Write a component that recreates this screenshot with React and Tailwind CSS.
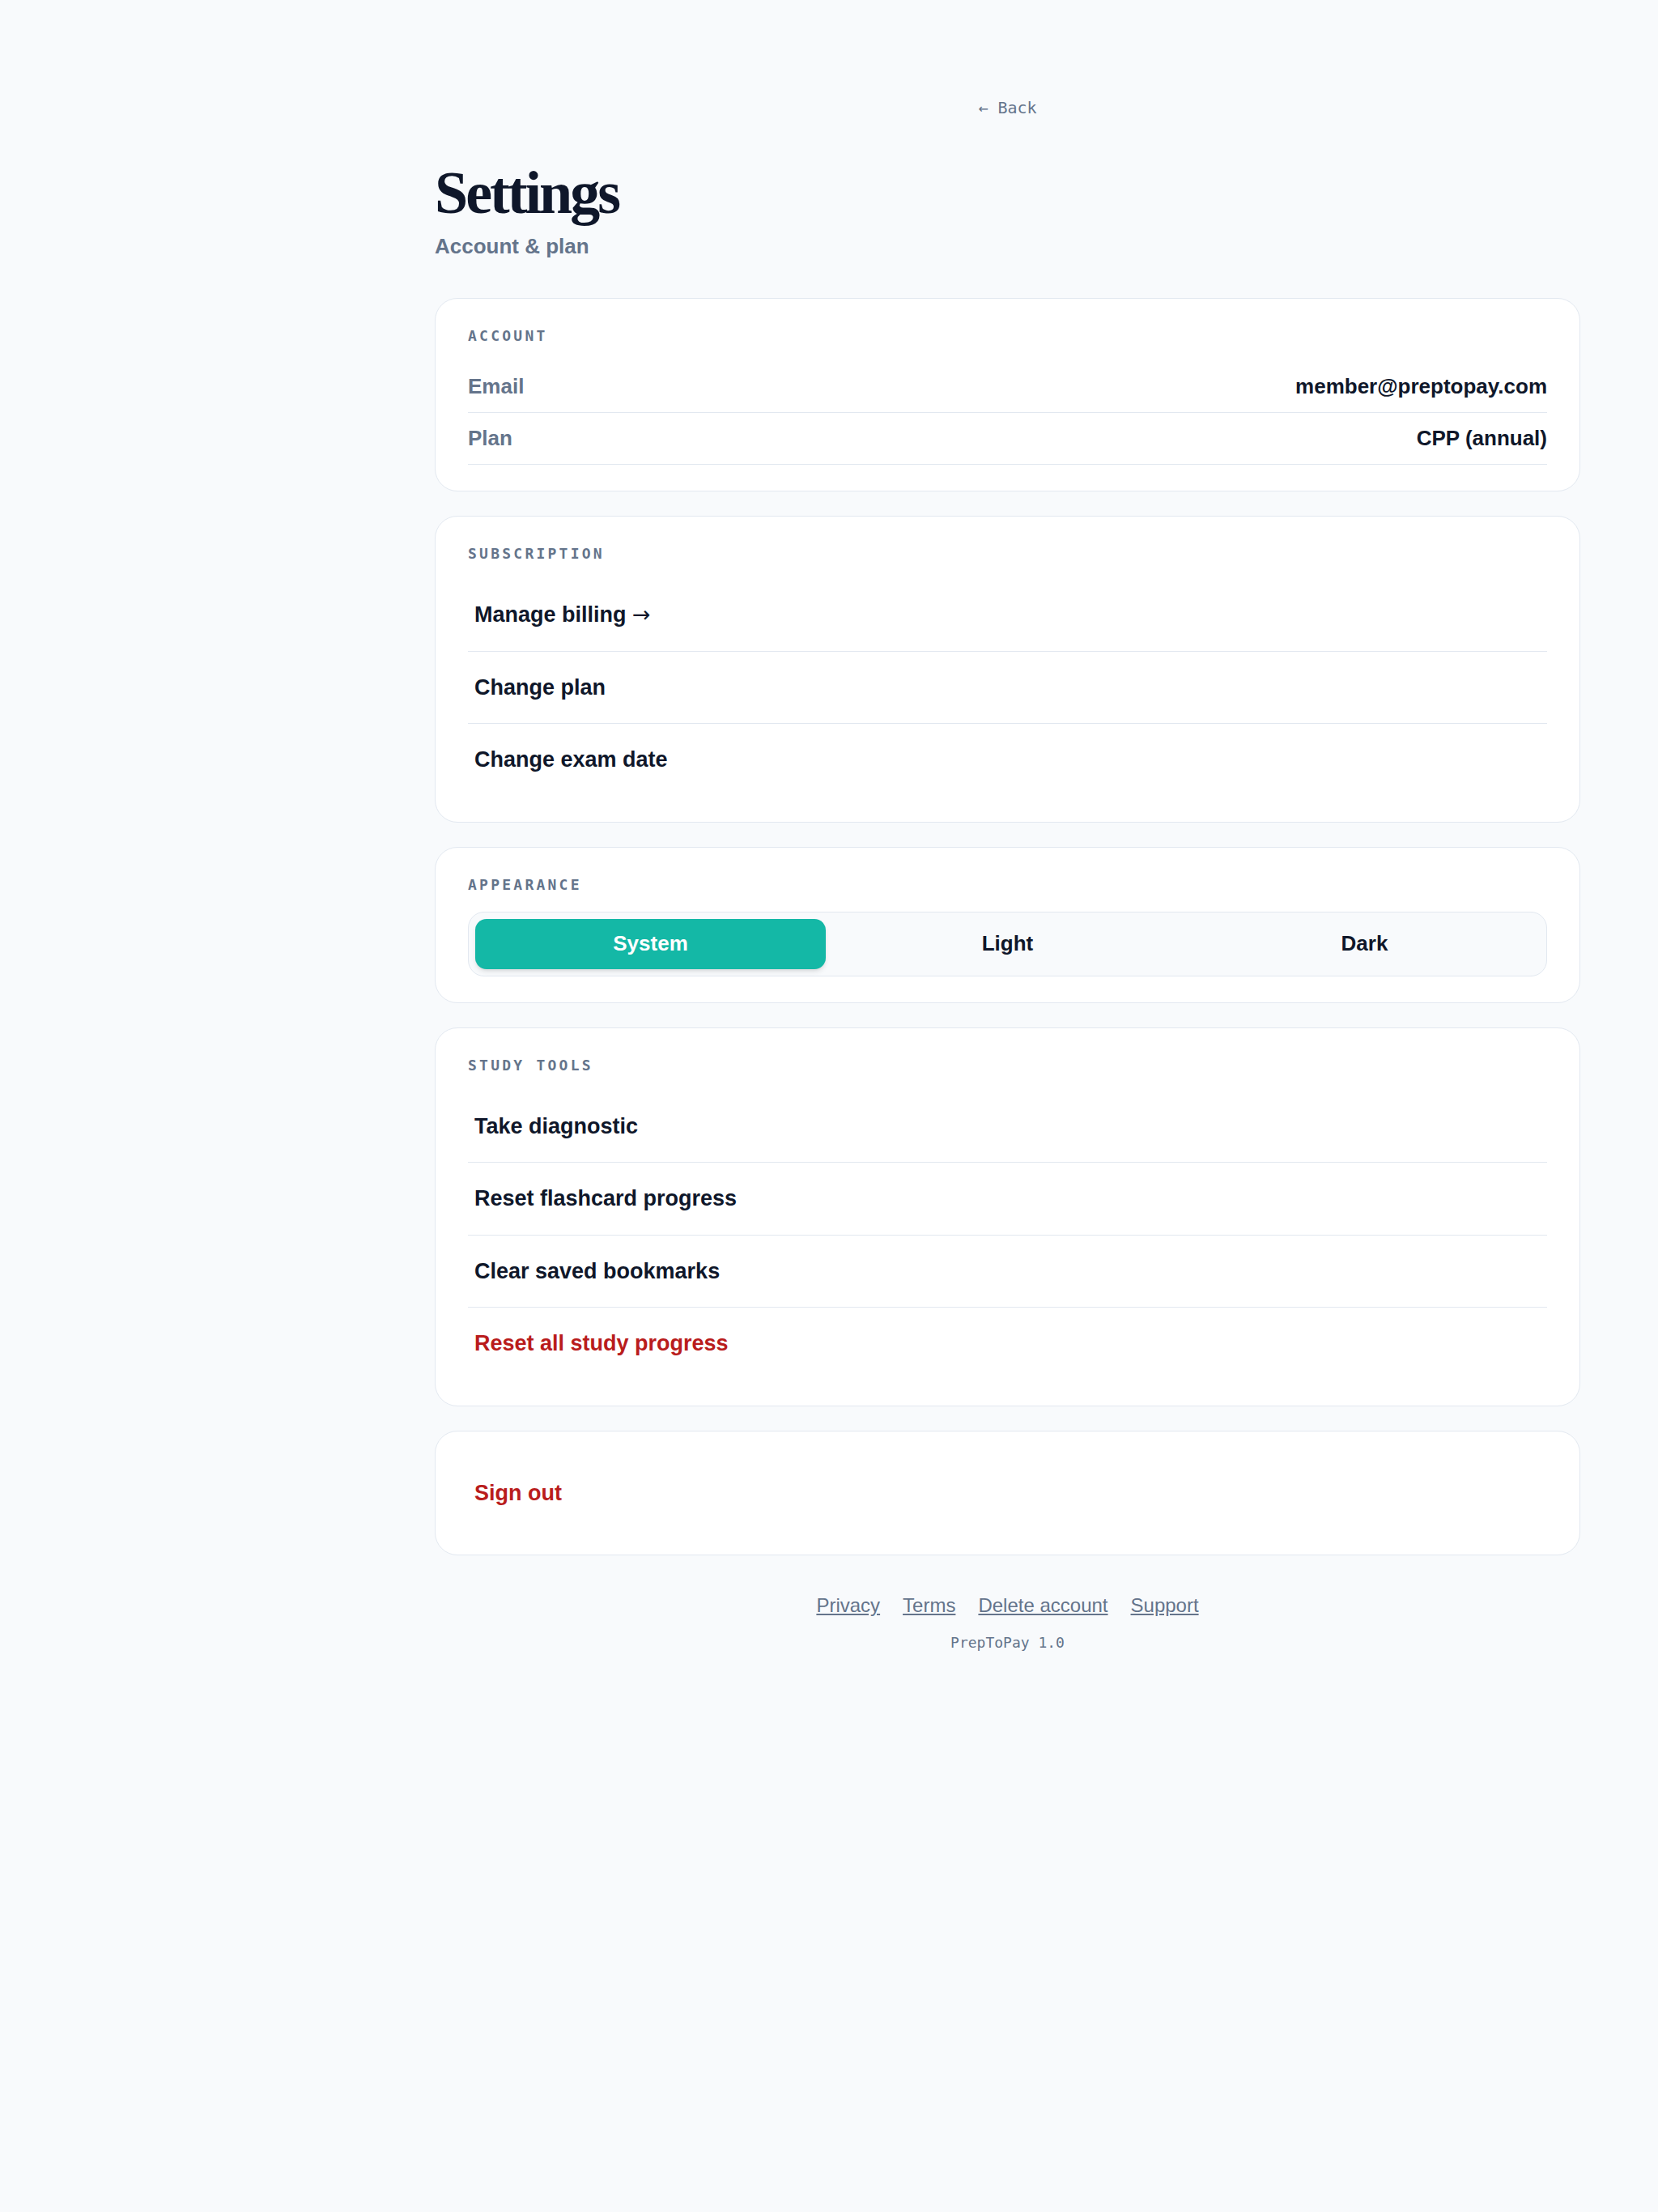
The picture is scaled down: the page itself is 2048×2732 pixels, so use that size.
import React from 'react';

const sans = { fontFamily: '"Liberation Sans", Arial, sans-serif' };

const Label = ({ children }) => (
    <p className="font-['DejaVu_Sans_Mono',monospace] text-[18px] leading-[27px] font-bold tracking-[0.18em] text-[#64748b] uppercase">
        {children}
    </p>
);

const Card = ({ children }) => (
    <div className="bg-white border border-[#e2e8f0] rounded-[28px] p-8">
        <div className="px-2">{children}</div>
    </div>
);

const ActionRow = ({ children, danger, last }) => (
    <button
        className={
            'w-full text-left px-2 py-6 text-[27px] leading-[1.5] font-bold ' +
            (danger ? 'text-[#b91c1c] ' : 'text-[#0f172a] ') +
            (last ? '' : 'border-b border-[#e2e8f0]')
        }
    >
        {children}
    </button>
);

const InfoRow = ({ label, value }) => (
    <div className="flex justify-between items-center py-3 border-b border-[#e2e8f0] text-[26px] leading-[39px] font-bold">
        <span className="text-[#64748b]">{label}</span>
        <span className="text-[#0f172a]">{value}</span>
    </div>
);

const App = () => {
    const mode = 'System';

    return (
        <div className="min-h-[2732px] bg-[#f8fafc] flex" style={sans}>
            <aside className="w-[441px] shrink-0"></aside>
            <main className="flex-1 px-24 pt-[118px]">
                <div className="text-center">
                    <a className="font-['DejaVu_Sans_Mono',monospace] text-[20px] leading-[30px] text-[#64748b]">← Back</a>
                </div>

                <h1 className="mt-[50px] font-['Liberation_Serif',serif] text-[74px] leading-[1.1] font-bold tracking-[-0.04em] text-[#0f172a]">
                    Settings
                </h1>
                <p className="mt-[6px] text-[26px] leading-[39px] font-bold text-[#64748b]">Account &amp; plan</p>

                <div className="mt-[44px] flex flex-col gap-[30px]">
                    <Card>
                        <Label>Account</Label>
                        <div className="mt-[18px]">
                            <InfoRow label="Email" value="member@preptopay.com" />
                            <InfoRow label="Plan" value="CPP (annual)" />
                        </div>
                    </Card>

                    <Card>
                        <Label>Subscription</Label>
                        <div className="mt-[18px] flex flex-col">
                            <ActionRow>
                                Manage billing <span className="font-['DejaVu_Sans',sans-serif] font-normal leading-none">→</span>
                            </ActionRow>
                            <ActionRow>Change plan</ActionRow>
                            <ActionRow last>Change exam date</ActionRow>
                        </div>
                    </Card>

                    <Card>
                        <Label>Appearance</Label>
                        <div className="mt-5 grid grid-cols-3 gap-2 p-[8px] bg-[#f8fafc] border border-[#e2e8f0] rounded-[20px]">
                            {['System', 'Light', 'Dark'].map((m) => (
                                <button
                                    key={m}
                                    className={
                                        'h-[62px] rounded-[14px] text-[26px] font-bold ' +
                                        (m === mode ? 'bg-[#14b8a6] text-white shadow-md' : 'text-[#0f172a]')
                                    }
                                >
                                    {m}
                                </button>
                            ))}
                        </div>
                    </Card>

                    <Card>
                        <Label>Study tools</Label>
                        <div className="mt-[18px] flex flex-col">
                            <ActionRow>Take diagnostic</ActionRow>
                            <ActionRow>Reset flashcard progress</ActionRow>
                            <ActionRow>Clear saved bookmarks</ActionRow>
                            <ActionRow danger last>Reset all study progress</ActionRow>
                        </div>
                    </Card>

                    <Card>
                        <ActionRow danger last>Sign out</ActionRow>
                    </Card>
                </div>

                <div className="mt-[44px] flex justify-center gap-7 text-[24px] leading-[36px] text-[#64748b]">
                    <a className="underline">Privacy</a>
                    <a className="underline">Terms</a>
                    <a className="underline">Delete account</a>
                    <a className="underline">Support</a>
                </div>
                <p className="mt-[14px] text-center font-['DejaVu_Sans_Mono',monospace] text-[18px] leading-[27px] text-[#64748b]">
                    PrepToPay 1.0
                </p>
            </main>
        </div>
    );
};

export default App;
